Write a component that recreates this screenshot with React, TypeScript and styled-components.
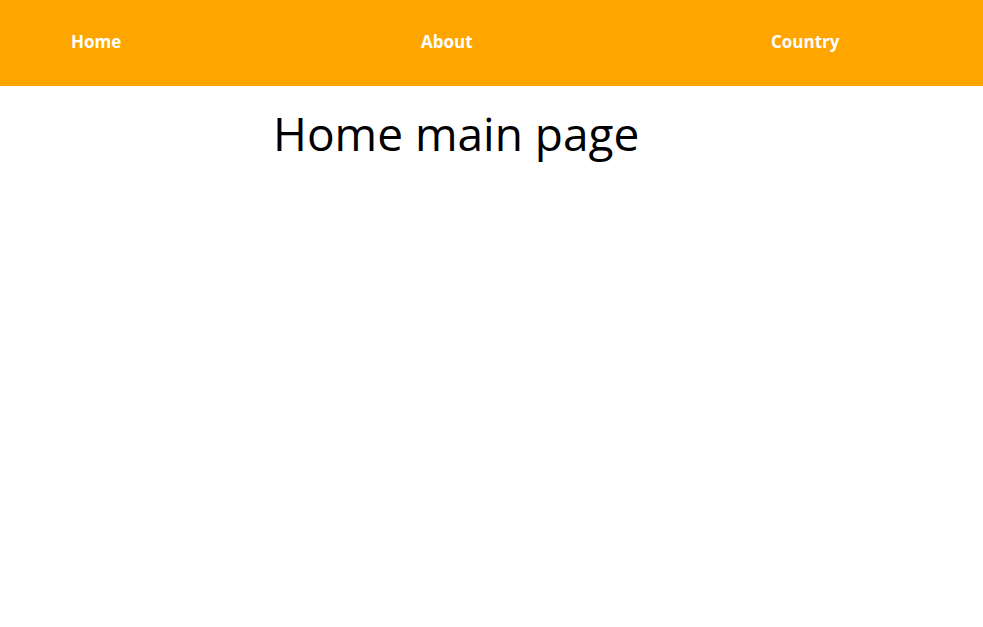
import React from "react";
import styled, { createGlobalStyle } from "styled-components";

const Global = createGlobalStyle`
  html, body { margin: 0; padding: 0; background: #ffffff; }
  body { font-family: "Open Sans", "Noto Sans", sans-serif; }
`;

const NavBar = styled.nav`
  display: grid;
  grid-template-columns: 350px 350px auto;
  align-items: center;
  height: 86px;
  background: #ffa500;
  padding: 0 0 3px 71px;
  box-sizing: border-box;
`;

const NavItem = styled.a`
  color: #ffffff;
  font-weight: 700;
  font-size: 17px;
  text-decoration: none;
  line-height: 1;
`;

const Main = styled.main`
  padding-left: 273px;
`;

const Title = styled.h1`
  margin: 16px 0 0;
  font-weight: 400;
  font-size: 46px;
  line-height: 62px;
  color: #000000;
`;

export default function App() {
  return (
    <>
      <Global />
      <NavBar>
        <NavItem href="#">Home</NavItem>
        <NavItem href="#">About</NavItem>
        <NavItem href="#">Country</NavItem>
      </NavBar>
      <Main>
        <Title>Home main page</Title>
      </Main>
    </>
  );
}
